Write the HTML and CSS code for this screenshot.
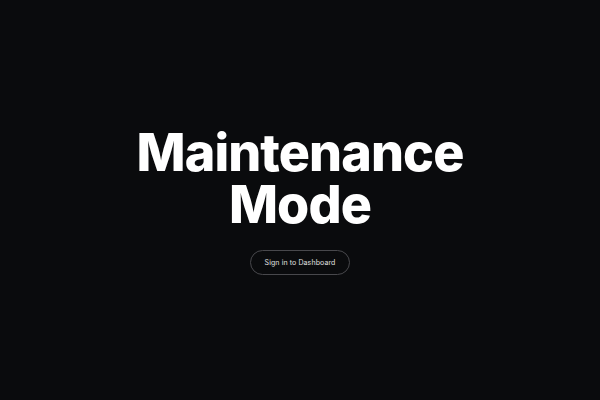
FILE: index.html
```html
<!DOCTYPE html>
<html lang="en">
<head>
<meta charset="utf-8">
<title>Maintenance Mode</title>
<link rel="stylesheet" href="styles.css">
</head>
<body>
<main class="page">
  <h1 class="title">Maintenance<br>Mode</h1>
  <a class="signin" href="#">Sign in to Dashboard</a>
</main>
</body>
</html>
```

FILE: styles.css
```css
html, body {
  margin: 0;
  padding: 0;
  height: 100%;
}
body {
  background: #0a0b0d;
  color: #ffffff;
  font-family: "Inter", "Noto Sans", sans-serif;
}
.page {
  height: 100%;
  display: flex;
  flex-direction: column;
  align-items: center;
  justify-content: center;
  padding-top: 1px;
  box-sizing: border-box;
}
.title {
  margin: 0;
  font-size: 52px;
  font-weight: 800;
  line-height: 52px;
  letter-spacing: -0.9px;
  text-align: center;
}
.signin {
  margin-top: 19px;
  display: flex;
  align-items: center;
  justify-content: center;
  width: 100px;
  height: 25px;
  box-sizing: border-box;
  border: 1px solid #48484c;
  border-radius: 13px;
  color: #e0e0e0;
  font-size: 7px;
  font-weight: 400;
  letter-spacing: 0.1px;
  text-decoration: none;
}
```
